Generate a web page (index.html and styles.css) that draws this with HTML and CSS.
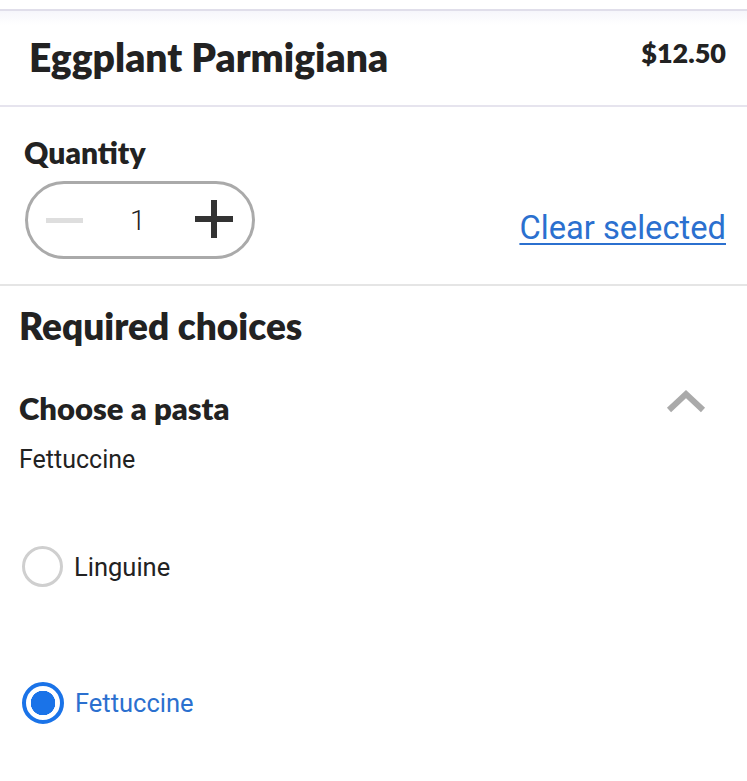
FILE: index.html
```html
<!DOCTYPE html>
<html lang="en">
<head>
    <meta charset="UTF-8">
    <meta name="viewport" content="width=device-width, initial-scale=1.0">
    <title>Eggplant Parmigiana</title>
    <link rel="stylesheet" href="styles.css">
</head>
<body>
    <div class="top-gap"></div>

    <div class="item-header">
        <h1 class="item-title">Eggplant Parmigiana</h1>
        <div class="item-price">$12.50</div>
    </div>

    <div class="quantity-section">
        <div class="section-label">Quantity</div>
        <div class="quantity-row">
            <div class="stepper">
                <button class="step-btn minus" disabled>
                    <svg width="37" height="6" viewBox="0 0 37 6"><rect x="0" y="0" width="37" height="5" fill="#dedede"/></svg>
                </button>
                <span class="step-value">1</span>
                <button class="step-btn plus">
                    <svg width="38" height="38" viewBox="0 0 38 38"><rect x="0" y="16" width="38" height="6" fill="#333"/><rect x="16" y="0" width="6" height="38" fill="#333"/></svg>
                </button>
            </div>
            <a href="#" class="clear-link">Clear selected</a>
        </div>
    </div>

    <div class="choices">
        <h2 class="choices-title">Required choices</h2>
        <div class="group-head">
            <div>
                <h3 class="group-title">Choose a pasta</h3>
                <div class="group-selected">Fettuccine</div>
            </div>
            <svg class="chevron" width="40" height="24" viewBox="0 0 40 24">
                <polyline points="3,21 20,5 37,21" fill="none" stroke="#aaa" stroke-width="6"/>
            </svg>
        </div>

        <label class="option">
            <span class="radio"></span>
            <span class="option-text">Linguine</span>
        </label>
        <label class="option checked">
            <span class="radio"></span>
            <span class="option-text">Fettuccine</span>
        </label>
    </div>
</body>
</html>
```

FILE: styles.css
```css
body {
    margin: 0;
    background: #fff;
    color: #222;
    font-family: Roboto, "Liberation Sans", sans-serif;
}

.top-gap {
    height: 9px;
}

.item-header {
    display: flex;
    justify-content: space-between;
    align-items: flex-start;
    height: 94px;
    padding: 0 21px 0 29px;
    border-top: 2px solid #e0deea;
    border-bottom: 2px solid #e6e4ee;
    background: linear-gradient(#f6f6fb, #fff 14px);
}

.item-title {
    margin: 23px 0 0;
    font-family: Lato, "Liberation Sans", sans-serif;
    font-weight: 800;
    font-size: 39px;
    color: #222;
}

.item-price {
    margin-top: 25px;
    font-family: Lato, "Liberation Sans", sans-serif;
    font-weight: 800;
    font-size: 27px;
    color: #222;
}

.quantity-section {
    padding: 27px 21px 25px 25px;
    border-bottom: 2px solid #e5e5e5;
}

.section-label {
    margin-left: -1px;
    font-family: Lato, "Liberation Sans", sans-serif;
    font-weight: 800;
    font-size: 30px;
    color: #222;
}

.quantity-row {
    display: flex;
    justify-content: space-between;
    align-items: flex-end;
    margin-top: 11px;
}

.stepper {
    display: flex;
    align-items: center;
    width: 224px;
    height: 72px;
    border: 3px solid #aaa;
    border-radius: 39px;
}

.step-btn {
    display: flex;
    align-items: center;
    justify-content: center;
    background: none;
    border: none;
    padding: 0;
    cursor: pointer;
}

.step-btn.minus {
    margin-left: 18px;
    margin-top: 1px;
}

.step-btn.plus {
    margin-left: 49px;
    margin-top: -3px;
}

.step-value {
    margin-left: 47px;
    font-size: 28px;
    font-weight: 300;
    color: #222;
}

.clear-link {
    margin-bottom: 12px;
    font-size: 32.7px;
    color: #2b70cf;
    text-decoration: underline;
    text-decoration-thickness: 2px;
    text-underline-offset: 4px;
}

.choices {
    padding: 17px 41px 0 19px;
}

.choices-title {
    margin: 0;
    font-family: Lato, "Liberation Sans", sans-serif;
    font-weight: 800;
    font-size: 37px;
    color: #222;
}

.group-head {
    display: flex;
    justify-content: space-between;
    align-items: flex-start;
    margin-top: 41px;
}

.group-title {
    margin: 0;
    font-family: Lato, "Liberation Sans", sans-serif;
    font-weight: 800;
    font-size: 31px;
    color: #222;
}

.group-selected {
    margin-top: 18px;
    font-size: 25px;
    color: #222;
}

.option {
    display: flex;
    align-items: center;
    gap: 11px;
    margin-left: 3px;
    margin-top: 72px;
    cursor: pointer;
}

.option + .option {
    margin-top: 95px;
}

.radio {
    box-sizing: border-box;
    width: 41px;
    height: 41px;
    border: 3px solid #cfcfcf;
    border-radius: 50%;
}

.option-text {
    font-size: 25.5px;
    color: #222;
}

.option.checked .radio {
    width: 42px;
    height: 42px;
    border: 4px solid #1a73e8;
    background: radial-gradient(circle, #1a73e8 0 12px, #fff 12.5px);
}

.option.checked .option-text {
    color: #2b70cf;
}
```
